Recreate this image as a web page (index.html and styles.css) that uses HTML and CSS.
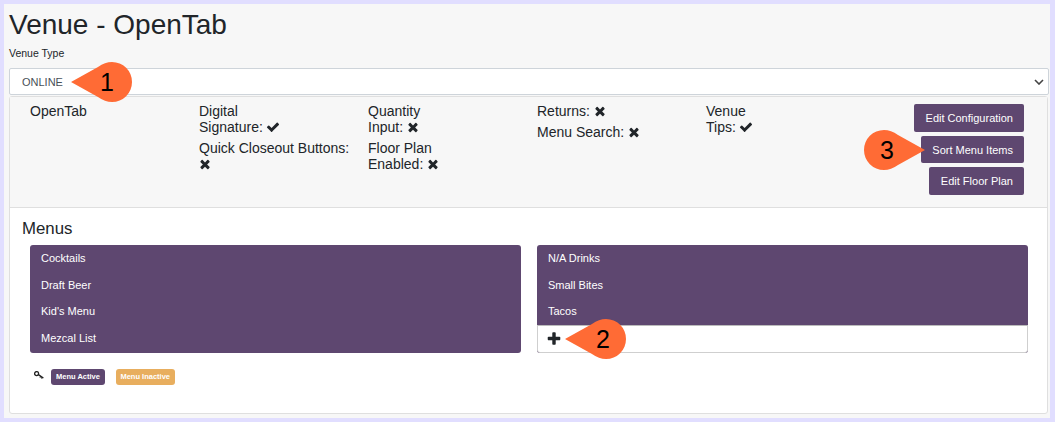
FILE: index.html
```html
<!DOCTYPE html>
<html lang="en">
<head>
<meta charset="utf-8">
<title>Venue - OpenTab</title>
<link rel="stylesheet" href="styles.css">
</head>
<body>
<svg class="defs" width="0" height="0" aria-hidden="true">
  <symbol id="i-check" viewBox="0 0 1792 1792"><path d="M1671 566q0 40-28 68l-724 724-136 136q-28 28-68 28t-68-28l-136-136-362-362q-28-28-28-68t28-68l136-136q28-28 68-28t68 28l294 295 656-657q28-28 68-28t68 28l136 136q28 28 28 68z"/></symbol>
  <symbol id="i-times" viewBox="0 0 1792 1792"><path d="M1490 1322q0 40-28 68l-136 136q-28 28-68 28t-68-28l-294-294-294 294q-28 28-68 28t-68-28l-136-136q-28-28-28-68t28-68l294-294-294-294q-28-28-28-68t28-68l136-136q28-28 68-28t68 28l294 294 294-294q28-28 68-28t68 28l136 136q28 28 28 68t-28 68l-294 294 294 294q28 28 28 68z"/></symbol>
  <symbol id="i-plus" viewBox="0 0 1792 1792"><path d="M1600 736v192q0 40-28 68t-68 28h-416v416q0 40-28 68t-68 28h-192q-40 0-68-28t-28-68v-416h-416q-40 0-68-28t-28-68v-192q0-40 28-68t68-28h416v-416q0-40 28-68t68-28h192q40 0 68 28t28 68v416h416q40 0 68 28t28 68z"/></symbol>
</svg>
<main class="page">
  <h1 class="title">Venue - OpenTab</h1>
  <label class="field-label" for="venue-type">Venue Type</label>
  <select class="select" id="venue-type"><option>ONLINE</option></select>
  <section class="card">
    <header class="card-head">
      <div class="col">OpenTab</div>
      <div class="col">
        <p class="attr">Digital<br>Signature: <svg class="ico"><use href="#i-check"/></svg></p>
        <p class="attr">Quick Closeout Buttons: <svg class="ico"><use href="#i-times"/></svg></p>
      </div>
      <div class="col">
        <p class="attr">Quantity<br>Input: <svg class="ico"><use href="#i-times"/></svg></p>
        <p class="attr">Floor Plan<br>Enabled: <svg class="ico"><use href="#i-times"/></svg></p>
      </div>
      <div class="col">
        <p class="attr">Returns: <svg class="ico"><use href="#i-times"/></svg></p>
        <p class="attr">Menu Search: <svg class="ico"><use href="#i-times"/></svg></p>
      </div>
      <div class="col">
        <p class="attr">Venue<br>Tips: <svg class="ico"><use href="#i-check"/></svg></p>
      </div>
      <div class="col col-actions">
        <a class="btn">Edit Configuration</a>
        <a class="btn">Sort Menu Items</a>
        <a class="btn">Edit Floor Plan</a>
      </div>
    </header>
    <div class="card-body">
      <h2 class="menus-title">Menus</h2>
      <div class="menus">
        <ul class="menu-list">
          <li class="menu-item">Cocktails</li>
          <li class="menu-item">Draft Beer</li>
          <li class="menu-item">Kid's Menu</li>
          <li class="menu-item">Mezcal List</li>
        </ul>
        <ul class="menu-list">
          <li class="menu-item">N/A Drinks</li>
          <li class="menu-item">Small Bites</li>
          <li class="menu-item">Tacos</li>
          <li class="menu-add"><svg class="ico-plus"><use href="#i-plus"/></svg></li>
        </ul>
      </div>
      <div class="legend">
        <svg class="key" viewBox="0 0 10 9" fill="none" stroke="#222" stroke-width="1.3"><circle cx="2.6" cy="2.6" r="2"/><path d="M4.4 3.6 9.4 7M6.6 5 5.9 6.5M8.2 6.1 7.5 7.6"/></svg>
        <span class="badge badge-active">Menu Active</span>
        <span class="badge badge-inactive">Menu Inactive</span>
      </div>
    </div>
  </section>
</main>
<div class="pin pin-1"><svg viewBox="0 0 61 40"><path d="M0 20 L27 5 Q34 0 41 0 A20 20 0 0 1 41 40 Q34 40 27 35Z"/></svg><span class="pin-num">1</span></div>
<div class="pin pin-2"><svg viewBox="0 0 61 40"><path d="M0 20 L27 5 Q34 0 41 0 A20 20 0 0 1 41 40 Q34 40 27 35Z"/></svg><span class="pin-num">2</span></div>
<div class="pin pin-3"><svg viewBox="0 0 61 40"><path d="M61 20 L34 5 Q27 0 20 0 A20 20 0 0 0 20 40 Q27 40 34 35Z"/></svg><span class="pin-num">3</span></div>
</body>
</html>
```
FILE: styles.css
```css
* { box-sizing: border-box; }
html, body { height: 100%; }
body {
  margin: 0;
  padding: 4px 5px 4px 4px;
  background: #e1deff;
  font-family: "Liberation Sans", Arial, sans-serif;
  color: #212529;
  overflow: hidden;
  position: relative;
}
.defs { position: absolute; }
.page {
  background: #f7f7f7;
  padding: 0 1px 4px 5px;
  height: 100%;
  display: flex;
  flex-direction: column;
}
.title {
  margin: 0;
  padding-top: 4px;
  font-size: 28px;
  font-weight: 400;
  line-height: 34px;
  height: 38px;
}
.field-label {
  display: block;
  margin-top: 5px;
  font-size: 10.5px;
  line-height: 12px;
  height: 21px;
}
.select {
  display: block;
  width: 100%;
  height: 27px;
  padding: 0 12px;
  border: 1px solid #ced4da;
  border-radius: 2px;
  appearance: none;
  background: #fff url("data:image/svg+xml,%3Csvg xmlns='http://www.w3.org/2000/svg' width='10' height='6'%3E%3Cpath d='M1 1l4 4 4-4' fill='none' stroke='%23444' stroke-width='1.6'/%3E%3C/svg%3E") no-repeat right 4px center;
  font-family: inherit;
  font-size: 11px;
  color: #495057;
}
.card {
  flex: 1;
  margin: 1px 1px 0 0;
  border: 1px solid #dfdfdf;
  border-radius: 3px;
  background: #fff;
  display: flex;
  flex-direction: column;
}
.card-head {
  height: 111px;
  flex: none;
  display: grid;
  grid-template-columns: repeat(5, 169px) 1fr;
  padding: 6px 23px 0 12px;
  background: #f7f7f7;
  border-bottom: 1px solid #dfdfdf;
  font-size: 14px;
  line-height: 16px;
}
.col { padding: 0 8px; }
.attr { margin: 0 0 5px; }
.ico { width: 14px; height: 14px; margin-left: -1px; vertical-align: -2px; fill: #212529; }
.col-actions {
  padding: 1px 0 0;
  display: flex;
  flex-direction: column;
  align-items: flex-end;
  gap: 4px;
}
.btn {
  display: block;
  height: 28px;
  padding: 0 11px 0 11.5px;
  border-radius: 2px;
  background: #5e4770;
  color: #fff;
  font-size: 11px;
  line-height: 28px;
}
.btn:nth-child(2) { height: 27px; line-height: 28px; }
.card-body { padding: 11px 12px 0; }
.menus-title {
  margin: 0;
  font-size: 16.8px;
  font-weight: 400;
  line-height: 20px;
  height: 26px;
}
.menus {
  display: grid;
  grid-template-columns: 491px 491px;
  gap: 16px;
  padding-left: 8px;
}
.menu-list {
  margin: 0;
  padding: 0;
  list-style: none;
  border-radius: 3px;
  overflow: hidden;
  background: #5e4770;
}
.menu-item {
  height: 26.67px;
  padding-left: 11px;
  color: #fff;
  font-size: 11px;
  line-height: 27.4px;
}
.menu-add {
  height: 28px;
  padding-left: 8px;
  background: #fff;
  border: 1px solid #cfcfcf;
  border-top-color: #bbb;
  border-radius: 0 0 3px 3px;
  display: flex;
  align-items: center;
}
.ico-plus { width: 16px; height: 16px; margin-top: 1px; fill: #212529; }
.legend {
  display: flex;
  align-items: center;
  margin-top: 16px;
  padding-left: 12px;
}
.key { width: 10px; height: 9px; margin-right: 7px; margin-top: -2px; }
.badge {
  height: 16px;
  padding: 0 5px;
  border-radius: 3px;
  color: #fff;
  font-size: 7.5px;
  font-weight: 700;
  line-height: 15px;
}
.badge-active { background: #5e4770; margin-right: 11px; }
.badge-inactive { background: #e8ae5e; padding: 0 4.5px; }
.pin {
  position: absolute;
  width: 61px;
  height: 40px;
}
.pin svg { display: block; width: 100%; height: 100%; fill: #ff6b35; }
.pin-num {
  position: absolute;
  top: 0;
  width: 40px;
  font-size: 25px;
  line-height: 40px;
  text-align: center;
  color: #000;
}
.pin-1 { left: 71px; top: 62px; }
.pin-1 .pin-num { right: 5px; }
.pin-2 { left: 565px; top: 319px; }
.pin-2 .pin-num { right: 3px; }
.pin-3 { left: 864px; top: 130px; }
.pin-3 .pin-num { left: 3px; }
```
